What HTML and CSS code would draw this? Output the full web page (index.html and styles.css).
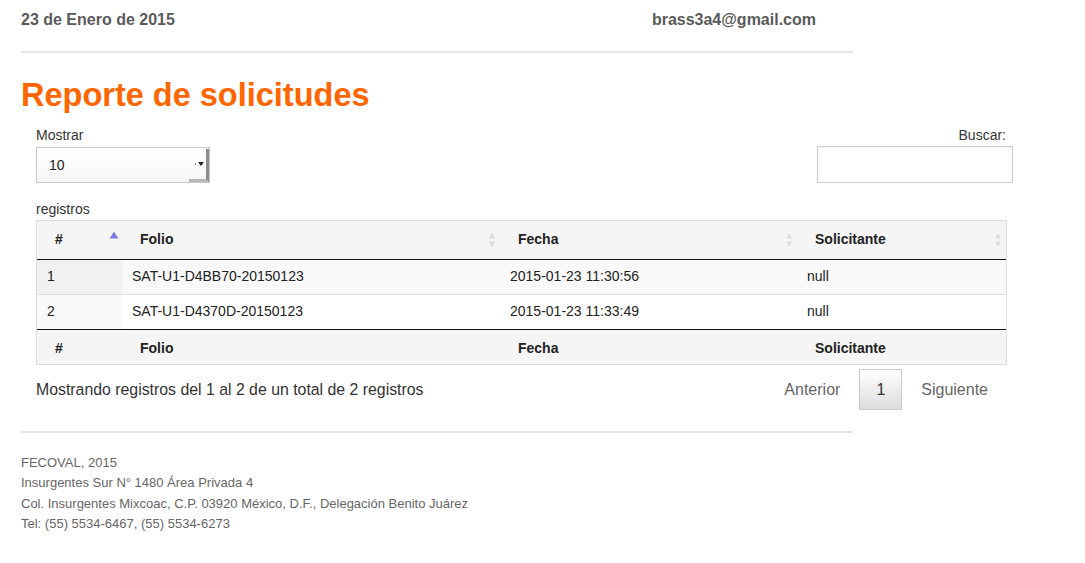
FILE: index.html
```html
<!DOCTYPE html>
<html lang="es">
<head>
<meta charset="utf-8">
<title>Reporte de solicitudes</title>
<link rel="stylesheet" href="styles.css">
</head>
<body>
<div class="page">
  <header class="top">
    <span class="top-date">23 de Enero de 2015</span>
    <span class="top-mail">brass3a4@gmail.com</span>
  </header>
  <hr class="rule">
  <h1 class="title">Reporte de solicitudes</h1>

  <div class="dt">
    <div class="dt-top">
      <div class="dt-length">
        <div class="lbl">Mostrar</div>
        <div class="select">
          <span class="select-val">10</span>
          <span class="select-btn"><span class="dot"></span><span class="caret"></span></span>
        </div>
        <div class="lbl">registros</div>
      </div>
      <div class="dt-filter">
        <div class="lbl">Buscar:</div>
        <div class="search"></div>
      </div>
    </div>

    <table class="grid">
      <colgroup>
        <col class="c1"><col class="c2"><col class="c3"><col class="c4">
      </colgroup>
      <thead>
        <tr>
          <th class="sort">#<svg class="arrow" width="10" height="14" viewBox="0 0 10 14"><path d="M5 0.5 L9.5 7.5 L0.5 7.5 Z" fill="#7b7be0"/></svg></th>
          <th class="sort">Folio<svg class="arrow" width="10" height="14" viewBox="0 0 10 14"><path d="M5 0 L8 5.5 L2 5.5 Z M2 8.5 L8 8.5 L5 14 Z" fill="#dcdcdc"/></svg></th>
          <th class="sort">Fecha<svg class="arrow" width="10" height="14" viewBox="0 0 10 14"><path d="M5 0 L8 5.5 L2 5.5 Z M2 8.5 L8 8.5 L5 14 Z" fill="#dcdcdc"/></svg></th>
          <th class="sort">Solicitante<svg class="arrow" width="10" height="14" viewBox="0 0 10 14"><path d="M5 0 L8 5.5 L2 5.5 Z M2 8.5 L8 8.5 L5 14 Z" fill="#dcdcdc"/></svg></th>
        </tr>
      </thead>
      <tbody>
        <tr class="odd">
          <td class="sorted">1</td>
          <td>SAT-U1-D4BB70-20150123</td>
          <td>2015-01-23 11:30:56</td>
          <td>null</td>
        </tr>
        <tr class="even">
          <td class="sorted">2</td>
          <td>SAT-U1-D4370D-20150123</td>
          <td>2015-01-23 11:33:49</td>
          <td>null</td>
        </tr>
      </tbody>
      <tfoot>
        <tr>
          <th>#</th>
          <th>Folio</th>
          <th>Fecha</th>
          <th>Solicitante</th>
        </tr>
      </tfoot>
    </table>

    <div class="dt-bottom">
      <div class="info">Mostrando registros del 1 al 2 de un total de 2 registros</div>
      <div class="pager">
        <span class="pbtn disabled">Anterior</span>
        <span class="pbtn current">1</span>
        <span class="pbtn disabled">Siguiente</span>
      </div>
    </div>
  </div>

  <hr class="rule rule-foot">
  <footer class="foot">
    <div>FECOVAL, 2015</div>
    <div>Insurgentes Sur N° 1480 Área Privada 4</div>
    <div>Col. Insurgentes Mixcoac, C.P. 03920 México, D.F., Delegación Benito Juárez</div>
    <div>Tel: (55) 5534-6467, (55) 5534-6273</div>
  </footer>
</div>
</body>
</html>
```

FILE: styles.css
```css
* { box-sizing: border-box; }

html, body {
  margin: 0;
  padding: 0;
  background: #fff;
}

body {
  font-family: "Liberation Sans", Arial, sans-serif;
  font-size: 14px;
  color: #333;
}

.page {
  padding-left: 21px;
}

.top {
  width: 832px;
  display: flex;
  justify-content: space-between;
  padding-top: 10px;
  padding-right: 37px;
  font-size: 16px;
  line-height: 20px;
  font-weight: bold;
  color: #5a5a5a;
}

.rule {
  width: 832px;
  height: 2px;
  margin: 21px 0 0 0;
  border: 0;
  background: #e5e5e5;
}

.title {
  margin: 24px 0 0 0;
  font-size: 32.5px;
  line-height: 36px;
  font-weight: bold;
  color: #ff6600;
}

.dt {
  margin: 12px 0 0 15px;
  width: 971px;
}

.dt-top {
  display: flex;
  justify-content: space-between;
}

.dt-length {
  padding-bottom: 1px;
}

.lbl {
  line-height: 20px;
  color: #333;
}

.dt-length .select {
  margin: 2px 0 16px 0;
  width: 174px;
  height: 36px;
  border: 1px solid #c8c8c8;
  background: linear-gradient(#fff, #f7f7f7);
  display: flex;
  align-items: center;
  justify-content: space-between;
}

.select-val {
  padding-left: 12px;
  font-size: 14px;
  color: #222;
}

.select-btn {
  align-self: stretch;
  width: 20px;
  margin-top: 1px;
  border-right: 3px solid #8c8c8c;
  border-bottom: 3px solid #b8b8b8;
  display: flex;
  align-items: center;
  justify-content: flex-end;
  gap: 2px;
  padding-right: 2px;
}

.dot {
  width: 1px;
  height: 2px;
  background: #777;
}

.caret {
  width: 0;
  height: 0;
  border-left: 3px solid transparent;
  border-right: 3px solid transparent;
  border-top: 4px solid #222;
}

.dt-filter {
  text-align: right;
}

.dt-filter .lbl {
  padding-right: 1px;
}

.search {
  margin: 1px -6px 0 0;
  width: 196px;
  height: 37px;
  border: 1px solid #ccc;
  box-shadow: inset 0 1px 2px rgba(0,0,0,0.06);
  background: #fff;
}

.grid {
  width: 971px;
  border-collapse: separate;
  border-spacing: 0;
  border: 1px solid #ddd;
  table-layout: fixed;
  line-height: 18px;
}

.c1 { width: 85px; }
.c2 { width: 378px; }
.c3 { width: 297px; }
.c4 { width: 209px; }

.grid th {
  text-align: left;
  font-weight: bold;
  color: #222;
  background: #f5f5f5;
  padding: 9px 18px 11px 18px;
}

.grid thead th {
  border-bottom: 1px solid #111;
  position: relative;
}

.grid thead th .arrow {
  position: absolute;
  right: 3px;
  top: 12px;
}

.grid thead th:first-child .arrow {
  top: 10px;
  right: 3px;
}

.grid tfoot th {
  border-top: 1px solid #111;
  padding: 9px 18px 7px 18px;
}

.grid td {
  padding: 7px 10px 9px 10px;
  color: #222;
}

.grid tbody tr.odd td { background: #f9f9f9; }
.grid tbody tr.even td { background: #fff; }
.grid tbody tr.odd td.sorted { background: #f1f1f1; }
.grid tbody tr.even td.sorted { background: #fafafa; }

.grid tbody tr + tr td {
  border-top: 1px solid #ddd;
}

.dt-bottom {
  display: flex;
  justify-content: space-between;
  align-items: flex-start;
  font-size: 16px;
  line-height: 23px;
}

.info {
  padding-top: 13px;
  font-size: 15.85px;
  color: #333;
}

.pager {
  padding-top: 4px;
  display: flex;
  margin-right: 2px;
}

.pbtn {
  padding: 8px 16px;
  margin-left: 2px;
  border: 1px solid transparent;
  color: #666;
}

.pbtn.current {
  color: #333;
  border-color: #cacaca;
  background: linear-gradient(#ffffff, #dcdcdc);
}

.rule-foot {
  margin-top: 21px;
}

.foot {
  padding-top: 20px;
  font-size: 13px;
  line-height: 20.3px;
  color: #666;
}
```
